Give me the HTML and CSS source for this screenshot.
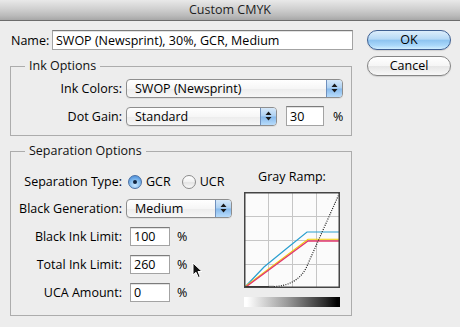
FILE: index.html
```html
<!DOCTYPE html>
<html lang="en">
<head>
<meta charset="utf-8">
<title>Custom CMYK</title>
<link rel="stylesheet" href="styles.css">
</head>
<body>
<div class="window">
  <div class="titlebar">Custom CMYK</div>
  <div class="main">
    <div class="form">
      <div class="name-row">
        <label class="name-label" for="name">Name:</label>
        <input id="name" class="field name-field" type="text" value="SWOP (Newsprint), 30%, GCR, Medium">
      </div>

      <fieldset class="group ink">
        <legend>Ink Options</legend>
        <div class="grid ink-grid">
          <span class="label">Ink Colors:</span>
          <div class="popup popup-ink">
            <span class="popup-text">SWOP (Newsprint)</span>
            <span class="popup-arrows"><svg width="7" height="10" viewBox="0 0 7 10"><path d="M3.5 0.5 L6.5 4 L0.5 4 Z M0.5 6 L6.5 6 L3.5 9.5 Z" fill="#1b1b1b"/></svg></span>
          </div>
          <span class="label">Dot Gain:</span>
          <div class="control-row">
            <div class="popup popup-dot">
              <span class="popup-text">Standard</span>
              <span class="popup-arrows"><svg width="7" height="10" viewBox="0 0 7 10"><path d="M3.5 0.5 L6.5 4 L0.5 4 Z M0.5 6 L6.5 6 L3.5 9.5 Z" fill="#1b1b1b"/></svg></span>
            </div>
            <input class="field dot-field" type="text" value="30">
            <span class="unit unit-dot">%</span>
          </div>
        </div>
      </fieldset>

      <fieldset class="group sep">
        <legend>Separation Options</legend>
        <div class="sep-body">
          <div class="grid sep-grid">
            <span class="label">Separation Type:</span>
            <div class="radios">
              <span class="radio checked"></span><span class="radio-text">GCR</span>
              <span class="radio second"></span><span class="radio-text">UCR</span>
            </div>

            <span class="label">Black Generation:</span>
            <div class="popup popup-black">
              <span class="popup-text">Medium</span>
              <span class="popup-arrows"><svg width="7" height="10" viewBox="0 0 7 10"><path d="M3.5 0.5 L6.5 4 L0.5 4 Z M0.5 6 L6.5 6 L3.5 9.5 Z" fill="#1b1b1b"/></svg></span>
            </div>

            <span class="label">Black Ink Limit:</span>
            <div class="control-row">
              <input class="field small-field" type="text" value="100">
              <span class="unit">%</span>
            </div>

            <span class="label">Total Ink Limit:</span>
            <div class="control-row">
              <input class="field small-field" type="text" value="260">
              <span class="unit">%</span>
            </div>

            <span class="label">UCA Amount:</span>
            <div class="control-row">
              <input class="field small-field" type="text" value="0">
              <span class="unit">%</span>
            </div>
          </div>

          <div class="ramp">
            <div class="ramp-title">Gray Ramp:</div>
            <svg class="ramp-graph" width="96" height="96" viewBox="0 0 96 96">
              <rect x="0" y="0" width="96" height="96" fill="#fbfbfb"/>
              <g stroke="#c6c6c6" stroke-width="1">
                <line x1="24.5" y1="0" x2="24.5" y2="96"/>
                <line x1="48.5" y1="0" x2="48.5" y2="96"/>
                <line x1="72.5" y1="0" x2="72.5" y2="96"/>
                <line x1="0" y1="24.5" x2="96" y2="24.5"/>
                <line x1="0" y1="48.5" x2="96" y2="48.5"/>
                <line x1="0" y1="72.5" x2="96" y2="72.5"/>
              </g>
              <polyline points="1,95 20,75 42,57 63,40 96,40" fill="none" stroke="#2a9fd0" stroke-width="1.2"/>
              <polyline points="1,94.6 64,47.3 96,47.3" fill="none" stroke="#f2cf00" stroke-width="1.1"/>
              <polyline points="1,95.6 64,49 96,49" fill="none" stroke="#e2386c" stroke-width="1.3"/>
              <path d="M1 95 L25 95" stroke="#2a2a2a" stroke-width="2"/>
              <path d="M25 95 L30 95" stroke="#7a7a7a" stroke-width="2.4"/>
              <path d="M30 94.6 C44 94 57 88 63 74 L95.5 1" fill="none" stroke="#1a1a1a" stroke-width="1.2" stroke-dasharray="1 1.3"/>
              <rect x="0.75" y="0.75" width="94.5" height="94.5" fill="none" stroke="#454545" stroke-width="1.5"/>
            </svg>
            <div class="ramp-bar"></div>
          </div>
        </div>
      </fieldset>
    </div>

    <div class="buttons">
      <button class="btn btn-default" type="button">OK</button>
      <button class="btn" type="button">Cancel</button>
    </div>
  </div>

  <svg class="cursor" width="11" height="17" viewBox="0 0 11 17">
    <path d="M1 1 L1 13 L4 10.3 L6.3 15.5 L8.2 14.6 L6 9.5 L10 9.5 Z" fill="#111" stroke="#fff" stroke-width="1" stroke-linejoin="round"/>
  </svg>
</div>
</body>
</html>
```

FILE: styles.css
```css
* {
  box-sizing: border-box;
}

html, body {
  margin: 0;
  padding: 0;
}

body {
  width: 460px;
  height: 327px;
  overflow: hidden;
  background: #ededed;
  font-family: "Open Sans", "DejaVu Sans", sans-serif;
  font-size: 12.5px;
  line-height: 15px;
  color: #000;
}

.window {
  position: relative;
  width: 460px;
  height: 327px;
  background: #ededed;
}

.titlebar {
  height: 21px;
  border-bottom: 1px solid #6c6c6c;
  background: linear-gradient(#e9e9e9, #d0d0d0 45%, #b9b9b9 80%, #a7a7a7);
  text-align: center;
  line-height: 20px;
  color: #1e1e1e;
}

.main {
  display: flex;
  align-items: flex-start;
  padding: 9px 0 0 10px;
}

.form {
  width: 343px;
  display: flex;
  flex-direction: column;
}

.name-row {
  display: flex;
  align-items: center;
  justify-content: space-between;
  height: 20px;
}

.name-label {
  padding-left: 1px;
}

.field {
  height: 20px;
  margin: 0;
  padding: 0 3px;
  border: 1px solid #a3a3a3;
  border-top-color: #7c7c7c;
  background: #fff;
  box-shadow: inset 0 1px 0 #e2e2e2;
  font: inherit;
  line-height: 18px;
  color: #000;
  border-radius: 0;
  outline: none;
}

.name-field {
  width: 301px;
}

.group {
  margin: 0;
  padding: 0;
  min-width: 0;
  width: 342px;
  border: 1px solid #acacac;
}

.group legend {
  margin-left: 14px;
  padding: 0 4px;
  line-height: 14px;
  color: #111;
}

.ink {
  margin-top: 9px;
  padding: 5px 0 9px 0;
}

.sep {
  margin-top: 8px;
  padding: 0 0 8px 0;
}

.grid {
  display: grid;
  grid-template-columns: 111px auto;
  column-gap: 4px;
  align-items: center;
}

.ink-grid {
  grid-auto-rows: 20px;
  row-gap: 8px;
}

.label {
  text-align: right;
  white-space: nowrap;
}

.control-row {
  display: flex;
  align-items: center;
}

.popup {
  display: flex;
  height: 19px;
  border: 1px solid #8e8e8e;
  border-radius: 4px;
  background: linear-gradient(#ffffff, #f6f6f6 50%, #ececec 51%, #f7f7f7);
  box-shadow: 0 1px 0 rgba(0, 0, 0, 0.06);
  overflow: hidden;
}

.popup-text {
  flex: 1;
  padding-left: 8px;
  line-height: 17px;
  white-space: nowrap;
}

.popup-arrows {
  width: 16px;
  display: flex;
  align-items: center;
  justify-content: center;
  border-left: 1px solid #6f90bd;
  background: linear-gradient(#d6e8f9, #acd0f2 48%, #86b9ec 52%, #b8dcfb);
}

.popup-ink {
  width: 217px;
}

.popup-dot {
  width: 151px;
}

.popup-black {
  width: 106px;
}

.dot-field {
  width: 38px;
  margin-left: 9px;
}

.unit {
  margin-left: 7px;
}

.unit-dot {
  margin-left: 9px;
}

.sep-body {
  display: flex;
  align-items: flex-start;
}

.sep-grid {
  margin-top: 15px;
  grid-template-rows: 17px 20px 20px 20px 20px;
  row-gap: 8px;
}

.small-field {
  width: 40px;
  height: 19px;
  margin-left: 4px;
}

.radios {
  display: flex;
  align-items: center;
}

.radio {
  width: 14px;
  height: 14px;
  margin-left: 2px;
  border-radius: 50%;
  border: 1px solid #8b8b8b;
  background: linear-gradient(#ffffff, #f1f1f1 50%, #e3e3e3 55%, #fafafa);
  position: relative;
}

.radio.checked {
  border-color: #4a6fa3;
  background: radial-gradient(circle at 50% 75%, #c9e6ff 0, #8ac0ee 45%, #5a9ae0 75%);
}

.radio.checked::after {
  content: "";
  position: absolute;
  left: 4px;
  top: 4px;
  width: 4px;
  height: 4px;
  border-radius: 50%;
  background: #11243f;
}

.radio.second {
  margin-left: 11px;
}

.radio-text {
  margin-left: 4px;
}

.ramp {
  margin-top: 12px;
  margin-left: auto;
  margin-right: 11px;
  width: 96px;
  display: flex;
  flex-direction: column;
  align-items: center;
}

.ramp-title {
  line-height: 14px;
  white-space: nowrap;
}

.ramp-graph {
  display: block;
  margin-top: 8px;
}

.ramp-bar {
  width: 96px;
  height: 10px;
  margin-top: 9px;
  background: linear-gradient(to right, #ffffff 3%, #9a9a9a 45%, #2a2a2a 85%, #000 97%);
}

.buttons {
  display: flex;
  flex-direction: column;
  gap: 6px;
  margin-left: 14px;
}

.btn {
  width: 84px;
  height: 20px;
  margin: 0;
  padding: 0;
  border: 1px solid #858585;
  border-radius: 10px;
  background: linear-gradient(#ffffff, #f5f5f5 50%, #e6e6e6 52%, #f8f8f8);
  box-shadow: 0 1px 1px rgba(0, 0, 0, 0.12);
  font: inherit;
  line-height: 18px;
  color: #000;
}

.btn-default {
  border-color: #3e5f92;
  background: linear-gradient(#dcedfb, #b6d9f6 45%, #8ec4f0 52%, #a9d7fa 80%, #d2efff);
}

.cursor {
  position: absolute;
  left: 192px;
  top: 262px;
}
```
